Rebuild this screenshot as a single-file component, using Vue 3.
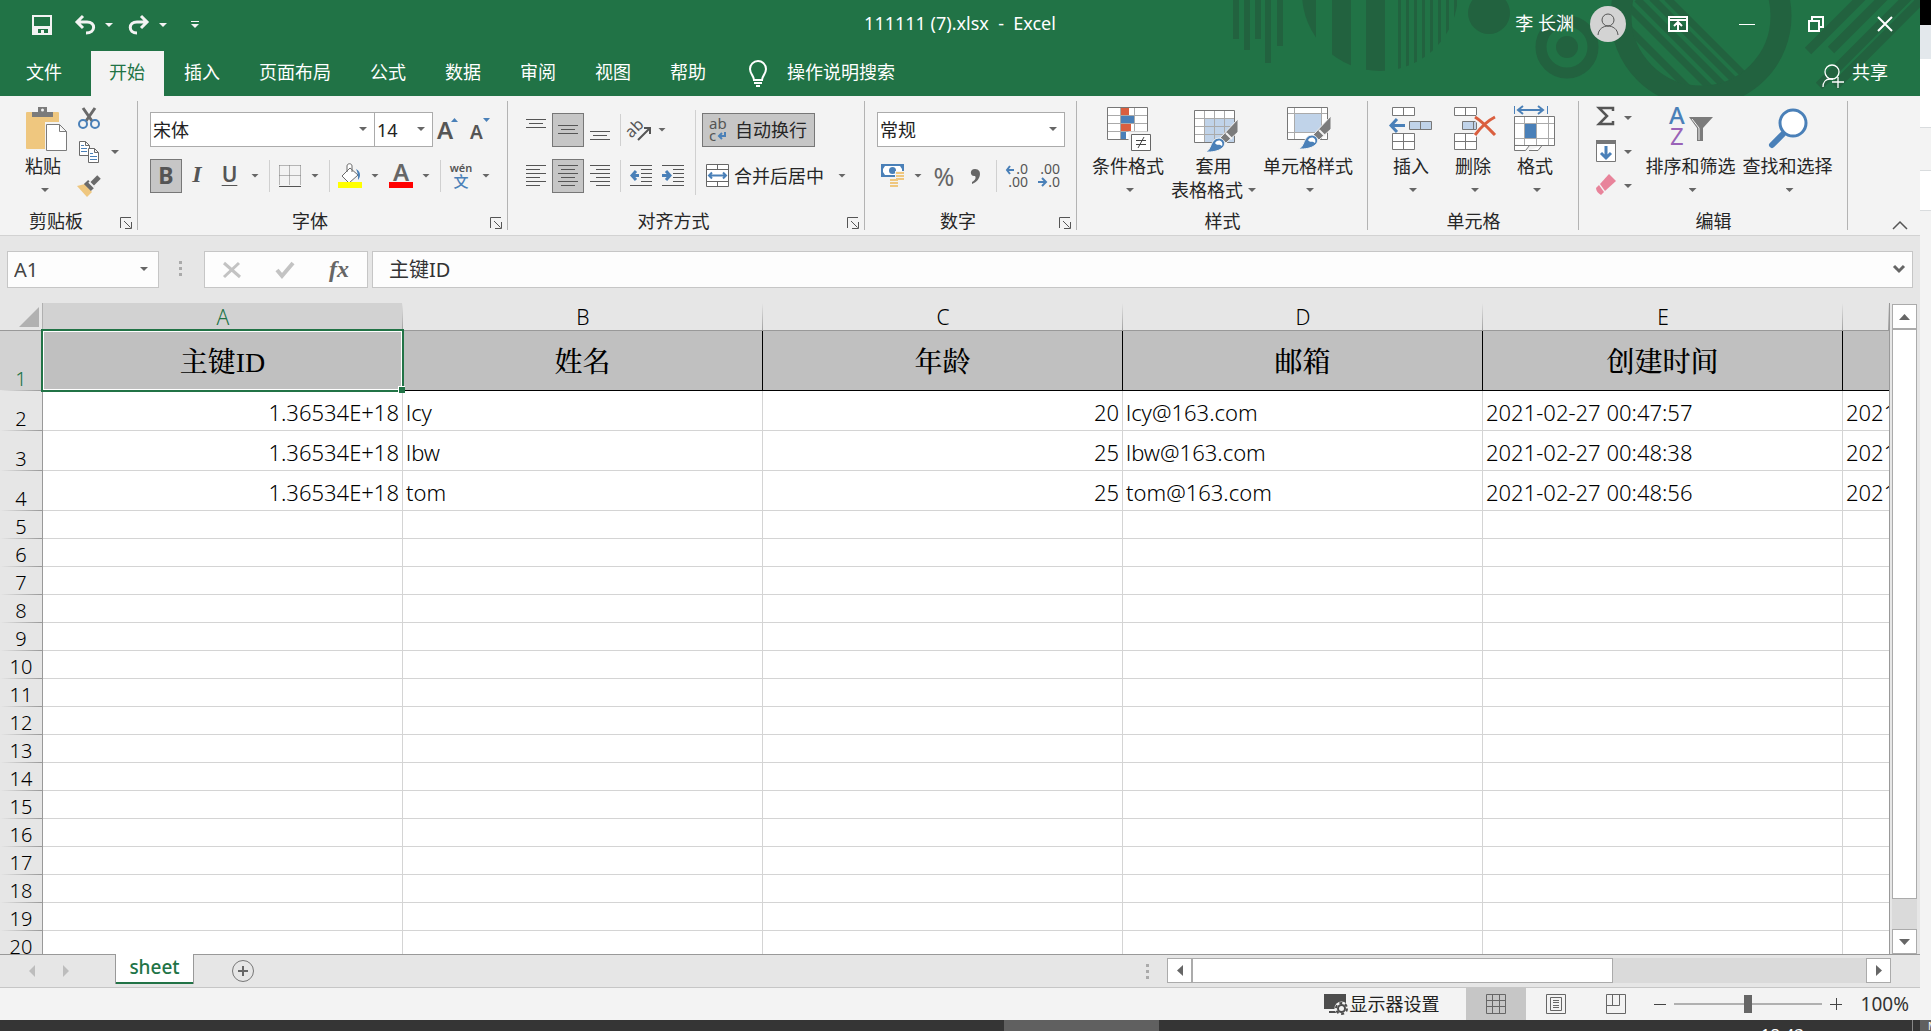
<script setup>
import { ref } from 'vue'

const title = '111111 (7).xlsx  -  Excel'
const tabs = ['插入', '页面布局', '公式', '数据', '审阅', '视图', '帮助']
const columns = ['A', 'B', 'C', 'D', 'E', '']
const headers = ['主键ID', '姓名', '年龄', '邮箱', '创建时间', '']
const records = [
  ['1.36534E+18', 'lcy', '20', 'lcy@163.com', '2021-02-27 00:47:57', '2021'],
  ['1.36534E+18', 'lbw', '25', 'lbw@163.com', '2021-02-27 00:48:38', '2021'],
  ['1.36534E+18', 'tom', '25', 'tom@163.com', '2021-02-27 00:48:56', '2021'],
]
const emptyRows = Array.from({ length: 16 }, (_, i) => i + 5)
const numeric = [0, 2]

const cellName = ref('A1')
const formula = ref('主键ID')
const zoom = ref(50)
const verticalThumb = 95
const horizontalThumb = 62.4
</script>

<template>
  <div class="desktop">
    <div class="window">
      <header class="top">
        <svg class="decor" width="700" height="96" viewBox="1220 0 700 96" aria-hidden="true">
          <defs>
            <clipPath id="disc"><circle cx="1380" cy="-7" r="78" /></clipPath>
            <clipPath id="hole"><circle cx="1701" cy="16" r="70" /></clipPath>
          </defs>
          <g fill="#22623f">
            <path d="M1233 0h6v39h-6zM1244 0h6v50h-6zM1255 0h6v39h-6zM1265 0h6v63h-6zM1277 0h6v46h-6z" />
            <g clip-path="url(#disc)">
              <path d="M1300 0h16v80h-16zM1332 0h19v80h-19zM1366 0h19v80h-19zM1398 0h3v80h-3zM1406 0h3v80h-3zM1414 0h3v80h-3zM1422 0h3v80h-3zM1430 0h3v80h-3zM1438 0h3v80h-3zM1446 0h3v80h-3zM1454 0h3v80h-3z" />
            </g>
            <circle cx="1489" cy="13" r="21" />
            <circle cx="1567" cy="47" r="11" />
          </g>
          <g fill="none" stroke="#22623f">
            <circle cx="1567" cy="47" r="26" stroke-width="11" />
            <circle cx="1701" cy="16" r="80" stroke-width="21" />
            <g clip-path="url(#hole)" stroke-width="7">
              <path d="M1610 10l90 90M1622 0l100 100M1637 -1l100 100M1652 -2l100 100M1667 -2l100 100" />
            </g>
            <path stroke-width="9" d="M1808 51l54-54M1831 50l54-54M1819 86l100-100M1835 86l92-92" />
          </g>
        </svg>

        <div class="titlebar">
          <div class="quick">
            <button class="q-save" aria-label="保存">
              <svg width="20" height="20" viewBox="0 0 20 20"><path fill="none" stroke="#f3f3f3" stroke-width="2" d="M1 1h18v18H1z" /><path fill="#f3f3f3" d="M1 11h18v8h-3v-5H6v5H1zM9 15h3v4H9z" /></svg>
            </button>
            <button class="q-icon" aria-label="撤消">
              <svg width="22" height="20" viewBox="0 0 22 20"><path fill="none" stroke="#f3f3f3" stroke-width="3" d="M9 1L3 7l6 6M3 7h10c9 0 9 11-1 11" /></svg>
            </button>
            <span class="caret light"></span>
            <button class="q-icon" aria-label="恢复">
              <svg width="22" height="20" viewBox="0 0 22 20"><path fill="none" stroke="#f3f3f3" stroke-width="3" d="M13 1l6 6-6 6M19 7H9C0 7 0 18 9 18" /></svg>
            </button>
            <span class="caret light"></span>
            <button class="q-more" aria-label="自定义快速访问工具栏">
              <svg width="8" height="8" viewBox="0 0 8 8"><path fill="#f3f3f3" d="M0 0h8v1H0zM0 3h8L4 7z" /></svg>
            </button>
          </div>
          <h1 class="title">{{ title }}</h1>
          <div class="account">
            <span class="user">李 长渊</span>
            <svg class="avatar" width="36" height="36" viewBox="0 0 36 36"><circle cx="18" cy="18" r="18" fill="#d3d3d3" /><g fill="none" stroke="#555" stroke-width="1"><circle cx="18" cy="14" r="6" /><path d="M8 29c1-12 19-12 20 0" /></g></svg>
            <button class="win" aria-label="功能区显示选项"><svg width="20" height="16" viewBox="0 0 20 16"><path fill="none" stroke="#fff" stroke-width="2" d="M1 1h18v14H1zM1 4h18M10 14V7M6 10l4-4 4 4" /></svg></button>
            <button class="win" aria-label="最小化"><svg width="16" height="16" viewBox="0 0 16 16"><path fill="#fff" d="M0 8h16v1H0z" /></svg></button>
            <button class="win" aria-label="还原"><svg width="16" height="16" viewBox="0 0 16 16"><path fill="none" stroke="#fff" stroke-width="2" d="M1 5h10v10H1zM4 5V1h11v10h-4" /></svg></button>
            <button class="win" aria-label="关闭"><svg width="16" height="16" viewBox="0 0 16 16"><path stroke="#fff" stroke-width="2" d="M1 1l14 14M15 1L1 15" /></svg></button>
          </div>
        </div>

        <nav class="tabs">
          <button class="tab file">文件</button>
          <button class="tab active">开始</button>
          <button v-for="t in tabs" :key="t" class="tab">{{ t }}</button>
          <button class="tell">
            <svg width="18" height="26" viewBox="0 0 18 26"><path fill="none" stroke="#fff" stroke-width="2" d="M5 19c0-4-4-6-4-11a8 8 0 0116 0c0 5-4 7-4 11zM5 22h8M7 25h4" /></svg>
            操作说明搜索
          </button>
          <button class="share">
            <svg width="22" height="24" viewBox="0 0 22 24"><g fill="none" stroke="#fff" stroke-width="1.300"><circle cx="10" cy="8" r="7" /><path d="M1 23c0-5 3-8 7-8h3M16 13v11M10 18h12" /></g></svg>
            共享
          </button>
        </nav>
      </header>

      <div class="ribbon">
        <section class="group">
          <div class="body clip">
            <button class="big">
              <svg width="46" height="46" viewBox="-3 0 46 46"><rect x="3" y="6" width="33" height="37" rx="1" fill="#efc77f" /><path fill="#7b7b7b" d="M9 11V6h6V1h9v5h6v5z" /><circle cx="19.500" cy="4" r="1.500" fill="#f3f3f3" /><path fill="#fff" stroke="#f3f3f3" stroke-width="4" d="M24 18h12l7 7v20H24z" /><path fill="#fff" stroke="#7b7b7b" d="M23.500 18.500h13l7 7v19h-20zM36.500 18.500v7h7" /></svg>
              <span>粘贴</span><i class="caret"></i>
            </button>
            <div class="stack">
              <button aria-label="剪切"><svg width="24" height="24" viewBox="0 0 24 24"><path fill="none" stroke="#6a6a6a" stroke-width="3" d="M6 2l9 13M18 2L9 15" /><g fill="none" stroke="#4a80b8" stroke-width="2"><circle cx="6" cy="18" r="4" /><circle cx="18" cy="18" r="4" /></g></svg></button>
              <button aria-label="复制"><svg width="24" height="24" viewBox="0 0 24 24"><g fill="#fff" stroke="#6a6a6a"><path d="M2.500 1.500h6l4 4v10h-10zM8.500 1.500v4h4" /><path d="M11.500 8.500h6l4 4v10h-10zM17.500 8.500v4h4" /></g><path stroke="#4a80b8" d="M4 5.500h3M4 8.500h6M4 11.500h6M13 13.500h3M13 16.500h7M13 19.500h7" /></svg><i class="caret"></i></button>
              <button aria-label="格式刷"><svg width="24" height="24" viewBox="0 0 24 24"><path fill="#efc77f" d="M0 12l8-2 7 8-5 5z" /><path stroke="#6a6a6a" stroke-width="6" d="M9 8l7 7" /><path stroke="#6a6a6a" stroke-width="5" d="M14 11l8-8" /><path stroke="#f3f3f3" stroke-width="2" d="M12 8l6 6" /></svg></button>
            </div>
          </div>
          <footer class="with-launch"><span>剪贴板</span><button class="launch" aria-label="剪贴板选项"><svg width="12" height="12" viewBox="0 0 12 12"><path fill="none" stroke="#555" d="M.5 11V.500H11M4 4l6.500 6.500M11.500 5v6.500H5" /></svg></button></footer>
        </section>

        <section class="group">
          <div class="body rows">
            <div class="row">
              <label class="combo font"><select aria-label="字体"><option>宋体</option></select><i class="caret"></i></label>
              <label class="combo size"><select aria-label="字号"><option>14</option></select><i class="caret"></i></label>
              <button class="ib" aria-label="增大字号"><svg width="24" height="24" viewBox="0 0 24 24"><text x="1" y="21" font-size="24" font-weight="600" fill="#555">A</text><path fill="#4a80b8" d="M15 4h7l-3.500-4z" /></svg></button>
              <button class="ib" aria-label="减小字号"><svg width="24" height="24" viewBox="0 0 24 24"><text x="2" y="21" font-size="19" font-weight="600" fill="#555">A</text><path fill="#4a80b8" d="M15 0h7l-3.500 4z" /></svg></button>
            </div>
            <div class="row">
              <button class="ib on bold">B</button>
              <button class="ib italic">I</button>
              <span class="split"><button class="under">U</button><i class="caret"></i></span><i class="sep"></i>
              <span class="split"><button aria-label="边框"><svg width="22" height="22" viewBox="0 0 22 22"><path fill="none" stroke="#777" stroke-dasharray="1 1" d="M.5.500h21M.5 10.500h21M.5.500v20M10.500.500v20M21.500.500v20" /><path stroke="#555" stroke-width="1" d="M0 21.500h22" /></svg></button><i class="caret"></i></span><i class="sep"></i>
              <span class="split"><button aria-label="填充颜色"><svg width="24" height="26" viewBox="0 0 24 26"><path fill="#fff" stroke="#6a6a6a" d="M12 5l8 7-9 8-7-7zM9 9V3c0-3 5-3 5 0v6" /><path fill="#4a80b8" d="M18 6c6 3 4 9 2 11 0-4 0-7-2-11" /><path fill="#ff0" d="M0 19h24v6H0z" /></svg></button><i class="caret"></i></span>
              <span class="split"><button aria-label="字体颜色"><svg width="24" height="26" viewBox="0 0 24 26"><text x="4" y="18" font-size="24" font-weight="600" fill="#666">A</text><path fill="#f00" d="M0 19h24v6H0z" /></svg></button><i class="caret"></i></span><i class="sep"></i>
              <span class="split"><button aria-label="显示拼音字段"><svg width="24" height="26" viewBox="0 0 24 26"><text x="12" y="9" text-anchor="middle" font-size="11" font-weight="600" fill="#555">wén</text><text x="12" y="24" text-anchor="middle" font-size="15" font-weight="500" fill="#4a80b8">文</text></svg></button><i class="caret"></i></span>
            </div>
          </div>
          <footer class="with-launch"><span>字体</span><button class="launch" aria-label="字体选项"><svg width="12" height="12" viewBox="0 0 12 12"><path fill="none" stroke="#555" d="M.5 11V.500H11M4 4l6.500 6.500M11.500 5v6.500H5" /></svg></button></footer>
        </section>

        <section class="group">
          <div class="body align">
            <div class="rows">
              <div class="row">
                <button class="ib" aria-label="顶端对齐"><svg width="20" height="22" viewBox="0 0 20 22"><path stroke="#555" d="M0 .500h20M3 4.500h14M0 8.500h20" /></svg></button>
                <button class="ib on" aria-label="垂直居中"><svg width="20" height="22" viewBox="0 0 20 22"><path stroke="#555" d="M0 6.500h20M3 10.500h14M0 14.500h20" /></svg></button>
                <button class="ib" aria-label="底端对齐"><svg width="20" height="22" viewBox="0 0 20 22"><path stroke="#555" d="M0 12.500h20M3 16.500h14M0 20.500h20" /></svg></button>
                <i class="sep near"></i>
                <button class="ib orient" aria-label="方向"><svg width="24" height="24" viewBox="0 0 24 24"><text transform="rotate(-45 8 15)" x="0" y="15" font-size="16" fill="#555">ab</text><path fill="none" stroke="#555" stroke-width="2" d="M9 22L20 11M15 10h6v6" /></svg></button><i class="caret"></i>
              </div>
              <div class="row">
                <button class="ib" aria-label="左对齐"><svg width="20" height="22" viewBox="0 0 20 22"><path stroke="#555" d="M0 .500h20M0 4.500h14M0 8.500h20M0 12.500h14M0 16.500h20M0 20.500h14" /></svg></button>
                <button class="ib on" aria-label="居中"><svg width="20" height="22" viewBox="0 0 20 22"><path stroke="#555" d="M0 .500h20M3 4.500h14M0 8.500h20M3 12.500h14M0 16.500h20M3 20.500h14" /></svg></button>
                <button class="ib" aria-label="右对齐"><svg width="20" height="22" viewBox="0 0 20 22"><path stroke="#555" d="M0 .500h20M6 4.500h14M0 8.500h20M6 12.500h14M0 16.500h20M6 20.500h14" /></svg></button>
                <i class="sep near"></i>
                <button class="ib orient" aria-label="减少缩进量"><svg width="22" height="22" viewBox="0 0 22 22"><path stroke="#555" d="M0 .500h22M11 4.500h11M11 8.500h11M11 12.500h11M11 16.500h11M0 20.500h22" /><path fill="none" stroke="#4a80b8" stroke-width="3" d="M9 10.500H2M6 6l-4 4.500L6 15" /></svg></button>
                <button class="ib" aria-label="增加缩进量"><svg width="22" height="22" viewBox="0 0 22 22"><path stroke="#555" d="M0 .500h22M11 4.500h11M11 8.500h11M11 12.500h11M11 16.500h11M0 20.500h22" /><path fill="none" stroke="#4a80b8" stroke-width="3" d="M0 10.500h7M4 6l4 4.500L4 15" /></svg></button>
              </div>
            </div>
            <i class="sep tall"></i>
            <div class="rows wide">
              <div class="row">
                <button class="wrap on"><svg width="20" height="24" viewBox="0 0 20 24"><text x="0" y="11" font-size="15" fill="#555">ab</text><text x="0" y="23" font-size="15" fill="#555">c</text><path fill="none" stroke="#4a80b8" stroke-width="2" d="M16 14v4h-5M13 15l-3 3 3 3" /></svg>自动换行</button>
              </div>
              <div class="row">
                <button class="merge"><svg width="23" height="23" viewBox="0 0 23 23"><path fill="#fff" stroke="#666" d="M.5.500h22v22H.5zM.5 5.500h22M.5 17.500h22M11.500.500v5M11.500 17.500v5" /><path fill="none" stroke="#4a80b8" stroke-width="2" d="M3 11.500h17M6 8.500l-3 3 3 3M17 8.500l3 3-3 3" /></svg>合并后居中<i class="caret"></i></button>
              </div>
            </div>
          </div>
          <footer class="with-launch"><span>对齐方式</span><button class="launch" aria-label="对齐选项"><svg width="12" height="12" viewBox="0 0 12 12"><path fill="none" stroke="#555" d="M.5 11V.500H11M4 4l6.500 6.500M11.500 5v6.500H5" /></svg></button></footer>
        </section>

        <section class="group">
          <div class="body rows">
            <div class="row">
              <label class="combo format"><select aria-label="数字格式"><option>常规</option></select><i class="caret"></i></label>
            </div>
            <div class="row">
              <button class="ib" aria-label="会计数字格式"><svg width="24" height="24" viewBox="0 0 24 24"><path fill="#4a80b8" d="M0 0h23v13H0z" /><path fill="#fff" d="M4 2h15l2 3v3l-2 3H4L2 8V5z" /><circle cx="11.500" cy="6.500" r="3.500" fill="#4a80b8" /><path fill="#f3f3f3" d="M14 7h10v11H14zM8 15h10v8H8z" /><path stroke="#efc77f" stroke-width="2" d="M15 9h8M15 12h8M15 15h8M9 16h8M9 19h8M9 22h8" /></svg></button>
              <i class="caret money"></i>
              <button class="ib percent">%</button>
              <button class="ib" aria-label="千位分隔样式"><svg width="10" height="16" viewBox="0 0 10 16"><path fill="#666" d="M1 14c4-2 4-5 3-6-5 1-6-7 0-7 8 0 6 12-3 15z" /></svg></button>
              <i class="sep near"></i>
              <button class="ib orient" aria-label="增加小数位数"><svg width="24" height="26" viewBox="0 0 24 26"><text x="23" y="11" text-anchor="end" font-size="14" fill="#555">.0</text><text x="23" y="24" text-anchor="end" font-size="14" fill="#555">.00</text><path fill="none" stroke="#4a80b8" stroke-width="2" d="M9 7H2M5 3L2 7l3 4" /></svg></button>
              <button class="ib" aria-label="减少小数位数"><svg width="24" height="26" viewBox="0 0 24 26"><text x="23" y="11" text-anchor="end" font-size="14" fill="#555">.00</text><text x="23" y="24" text-anchor="end" font-size="14" fill="#555">.0</text><path fill="none" stroke="#4a80b8" stroke-width="2" d="M1 19h8M5 15l4 4-4 4" /></svg></button>
            </div>
          </div>
          <footer class="with-launch"><span>数字</span><button class="launch" aria-label="数字选项"><svg width="12" height="12" viewBox="0 0 12 12"><path fill="none" stroke="#555" d="M.5 11V.500H11M4 4l6.500 6.500M11.500 5v6.500H5" /></svg></button></footer>
        </section>

        <section class="group">
          <div class="body styles">
            <button class="big">
              <svg width="46" height="46" viewBox="0 0 46 46"><path fill="#fff" stroke="#777" d="M2.500 1.500h40v32h-40z" /><path stroke="#aaa" d="M3 9.500h39M3 17.500h39M3 25.500h39M15.500 2v31M29.500 2v31" /><path fill="#da5f3f" d="M16 2h8v7h-8zM16 18h10v7H16z" /><path fill="#4a80b8" d="M16 10h13v7H16zM16 26h5v7h-5z" /><path fill="#fff" stroke="#f3f3f3" stroke-width="3" d="M25 27h21v19H25z" /><path fill="#fff" stroke="#666" d="M26.500 28.500h19v16h-19z" /><path stroke="#444" d="M31 34.500h10M31 38.500h10M39 31l-6 11" /></svg>
              <span>条件格式</span><i class="caret"></i>
            </button>
            <button class="big">
              <svg width="46" height="46" viewBox="0 0 46 46"><path fill="#fff" stroke="#777" d="M3.500 4.500h40v32h-40z" /><path fill="#c0d3e9" d="M14 13h29v23H14z" /><path stroke="#aaa" d="M4 12.500h39M4 20.500h39M4 28.500h39M13.500 5v31M23.500 5v31M33.500 5v31" /><path fill="#7b7b7b" stroke="#f3f3f3" d="M47 13v13L35 37l-6-5z" /><path stroke="#f3f3f3" stroke-width="2" d="M35 27l6 6" /><path fill="#4a80b8" stroke="#f3f3f3" d="M14 46c7-1 5-14 14-14 9 1 9 15-14 14z" /><path fill="#fff" d="M24 37c3-5 9-2 7 3-2-2-5 0-7-3z" /></svg>
              <span>套用</span><span class="second">表格格式<i class="caret"></i></span>
            </button>
            <button class="big">
              <svg width="46" height="46" viewBox="0 0 46 46"><path fill="#fff" stroke="#777" d="M2.500 1.500h40v32h-40z" /><path fill="#c0d3e9" d="M10 8h26v18H10z" /><path stroke="#aaa" d="M3 7.500h39M3 26.500h39M9.500 2v31M36.500 2v31" /><path fill="#7b7b7b" stroke="#f3f3f3" d="M46 10v13L34 34l-6-5z" /><path stroke="#f3f3f3" stroke-width="2" d="M34 24l6 6" /><path fill="#4a80b8" stroke="#f3f3f3" d="M13 43c7-1 5-14 14-14 9 1 9 15-14 14z" /><path fill="#fff" d="M23 34c3-5 9-2 7 3-2-2-5 0-7-3z" /></svg>
              <span>单元格样式</span><i class="caret"></i>
            </button>
          </div>
          <footer><span>样式</span></footer>
        </section>

        <section class="group">
          <div class="body cells">
            <button class="big">
              <svg width="46" height="46" viewBox="0 0 46 46"><path fill="#fff" stroke="#777" d="M4.500 1.500h22v8h-22zM15.500 1.500v8M4.500 27.500h22v16h-22zM15.500 27.500v16M4.500 35.500h22" /><path fill="#c0d3e9" stroke="#777" d="M21.500 15.500h22v8h-22zM32.500 15.500v8" /><path fill="none" stroke="#4a80b8" stroke-width="3" d="M17 19.500H3M9 13l-6 6.500L9 26" /></svg>
              <span>插入</span><i class="caret"></i>
            </button>
            <button class="big">
              <svg width="46" height="46" viewBox="0 0 46 46"><path fill="#fff" stroke="#777" d="M4.500 1.500h22v8h-22zM15.500 1.500v8M4.500 27.500h22v16h-22zM15.500 27.500v16M4.500 35.500h22" /><path fill="#c0d3e9" stroke="#777" d="M12.500 15.500h14v8h-14zM23.500 15.500v8" /><path stroke="#f3f3f3" stroke-width="6" d="M25 11l20 18M45 11L25 29" /><path fill="none" stroke="#da5f3f" stroke-width="3" d="M25 11c8 5 14 12 20 18M45 11c-8 4-14 10-20 18" /></svg>
              <span>删除</span><i class="caret"></i>
            </button>
            <button class="big">
              <svg width="46" height="46" viewBox="0 0 46 46"><path fill="#fff" stroke="#777" d="M2.500 38v6.500h11l4-5M17 44.500h9l4-5M2.500 10.500h40v29h-40z" /><path stroke="#aaa" d="M3 17.500h39M3 32.500h39M12.500 11v28M24.500 11v28M36.500 11v28" /><path fill="#4a80b8" d="M13 18h11v14H13z" /><path fill="none" stroke="#4a80b8" stroke-width="2" d="M6 4h24M11 0L6 4l5 4M26 0l5 4-5 4" /><path stroke="#4a80b8" d="M2.500 0v8M35.500 0v8" /></svg>
              <span>格式</span><i class="caret"></i>
            </button>
          </div>
          <footer><span>单元格</span></footer>
        </section>

        <section class="group">
          <div class="body edit">
            <div class="stack">
              <button aria-label="自动求和"><svg width="24" height="24" viewBox="0 0 24 24"><path fill="none" stroke="#555" stroke-width="2.500" d="M19 5V2H5l8 8-8 8h14v-3" /></svg><i class="caret"></i></button>
              <button aria-label="填充"><svg width="24" height="24" viewBox="0 0 24 24"><path fill="#fff" stroke="#777" d="M2.500 1.500h19v20h-19z" /><path fill="#777" d="M2 0h20v4H2z" /><path fill="none" stroke="#4a80b8" stroke-width="3" d="M12 6v12M7 13l5 5 5-5" /></svg><i class="caret"></i></button>
              <button aria-label="清除"><svg width="24" height="24" viewBox="0 0 24 24"><path fill="#e8839a" d="M15 0l7 7-11 10-5-7z" /><path fill="#e8839a" d="M5 11l5 7-3 3c-3-2-5-4-5-7z" /></svg><i class="caret"></i></button>
            </div>
            <button class="big long">
              <svg width="46" height="46" viewBox="0 0 46 46"><text x="1" y="18" font-size="24" font-weight="500" fill="#4a80b8">A</text><text x="2" y="39" font-size="24" fill="#9a63b8">Z</text><path fill="#7b7b7b" d="M21 11h24L35 22v13h-6V22z" /><path fill="none" stroke="#f3f3f3" d="M24 13l7 9v12" /></svg>
              <span>排序和筛选</span><i class="caret"></i>
            </button>
            <button class="big long">
              <svg width="46" height="46" viewBox="0 0 46 46"><path stroke="#4a80b8" stroke-width="6" stroke-linecap="round" d="M7 39l11-11" /><circle cx="28" cy="17" r="13" fill="#fff" stroke="#4a80b8" stroke-width="3" /></svg>
              <span>查找和选择</span><i class="caret"></i>
            </button>
          </div>
          <footer><span>编辑</span></footer>
        </section>
        <button class="collapse" aria-label="折叠功能区"><svg width="16" height="10" viewBox="0 0 16 10"><path fill="none" stroke="#555" stroke-width="1.500" d="M1 9l7-7 7 7" /></svg></button>
      </div>

      <div class="formula">
        <label class="name"><input v-model="cellName" aria-label="名称框"><i class="caret"></i></label>
        <span class="dots"></span>
        <div class="fx">
          <button aria-label="取消"><svg width="18" height="18" viewBox="0 0 18 18"><path stroke="#c3c3c3" stroke-width="3" d="M1 2l16 14M16 2L1 16" /></svg></button>
          <button aria-label="输入"><svg width="20" height="18" viewBox="0 0 20 18"><path fill="none" stroke="#c3c3c3" stroke-width="4" d="M2 9l5 6L18 2" /></svg></button>
          <button class="fn" aria-label="插入函数">fx</button>
        </div>
        <label class="entry"><input v-model="formula" aria-label="编辑栏"><svg width="12" height="9" viewBox="0 0 12 9"><path fill="none" stroke="#666" stroke-width="3" d="M1 1l5 5 5-5" /></svg></label>
      </div>

      <div class="sheet">
        <div class="viewport">
          <table class="grid">
            <colgroup><col class="c-num"><col v-for="n in 5" :key="n" class="c-data"><col></colgroup>
            <thead>
              <tr>
                <th class="corner"><svg width="20" height="20" viewBox="0 0 20 20"><path fill="#b1b1b1" d="M20 0v20H0z" /></svg></th>
                <th v-for="(c, i) in columns" :key="i" scope="col" :class="{ sel: i === 0 }">{{ c }}</th>
              </tr>
            </thead>
            <tbody>
              <tr class="head">
                <th scope="row" class="sel">1</th>
                <td v-for="(h, i) in headers" :key="i" :class="{ cursor: i === 0 }">{{ h }}</td>
              </tr>
              <tr v-for="(r, i) in records" :key="i" class="record">
                <th scope="row">{{ i + 2 }}</th>
                <td v-for="(v, j) in r" :key="j" :class="{ num: numeric.includes(j) }">{{ v }}</td>
              </tr>
              <tr v-for="n in emptyRows" :key="n">
                <th scope="row">{{ n }}</th>
                <td v-for="k in 6" :key="k"></td>
              </tr>
            </tbody>
          </table>
        </div>
        <div class="vbar">
          <button aria-label="向上滚动"><svg width="11" height="6" viewBox="0 0 11 6"><path fill="#666" d="M0 6h11L5.500 0z" /></svg></button>
          <div class="track"><div class="thumb" :style="{ height: verticalThumb + '%' }"></div></div>
          <button aria-label="向下滚动"><svg width="11" height="6" viewBox="0 0 11 6"><path fill="#666" d="M0 0h11L5.500 6z" /></svg></button>
        </div>
      </div>

      <div class="sheetbar">
        <div class="arrows">
          <button aria-label="上一张工作表"><svg width="6" height="12" viewBox="0 0 6 12"><path fill="#bdbdbd" d="M6 0v12L0 6z" /></svg></button>
          <button aria-label="下一张工作表"><svg width="6" height="12" viewBox="0 0 6 12"><path fill="#bdbdbd" d="M0 0v12l6-6z" /></svg></button>
        </div>
        <button class="sheettab">sheet</button>
        <button class="add" aria-label="新工作表"><svg width="24" height="24" viewBox="0 0 24 24"><circle cx="12" cy="12" r="10.500" fill="none" stroke="#777" /><path stroke="#666" stroke-width="2" d="M12 7v10M7 12h10" /></svg></button>
        <span class="dots"></span>
        <div class="hbar">
          <button aria-label="向左滚动"><svg width="6" height="11" viewBox="0 0 6 11"><path fill="#666" d="M6 0v11L0 5.500z" /></svg></button>
          <div class="track"><div class="thumb" :style="{ width: horizontalThumb + '%' }"></div></div>
          <button aria-label="向右滚动"><svg width="6" height="11" viewBox="0 0 6 11"><path fill="#666" d="M0 0v11l6-5.500z" /></svg></button>
        </div>
      </div>

      <div class="status">
        <button class="display"><svg width="24" height="22" viewBox="0 0 24 22"><path fill="#4d4d4d" d="M0 1h22v15H0zM5 18h9v2H5z" /><circle cx="17.500" cy="15.500" r="7" fill="#f3f3f3" /><circle cx="17.500" cy="15.500" r="3.500" fill="none" stroke="#4d4d4d" stroke-width="2" /><circle cx="17.500" cy="15.500" r="5.500" fill="none" stroke="#4d4d4d" stroke-width="2" stroke-dasharray="3 2.760" /></svg>显示器设置</button>
        <button class="view on" aria-label="普通"><svg width="20" height="20" viewBox="0 0 20 20"><path fill="none" stroke="#666" d="M.5.500h19v19H.5zM.5 6.500h19M.5 12.500h19M6.500.500v19M13.500.500v19" /></svg></button>
        <button class="view" aria-label="页面布局"><svg width="20" height="20" viewBox="0 0 20 20"><path fill="none" stroke="#666" d="M.5.500h19v19H.5zM4.500 3.500h11v13h-11zM7 6.500h6M7 8.500h6M7 11.500h6M7 13.500h6" /></svg></button>
        <button class="view" aria-label="分页预览"><svg width="20" height="20" viewBox="0 0 20 20"><path fill="none" stroke="#666" d="M.5.500h19v19H.5zM.5 11.500h13V.500M6.500.500v11" /></svg></button>
        <button class="zb minus" aria-label="缩小"><svg width="12" height="12" viewBox="0 0 12 12"><path stroke="#444" d="M0 6.500h12" /></svg></button>
        <input v-model="zoom" class="zoom" type="range" min="0" max="100" aria-label="缩放">
        <button class="zb" aria-label="放大"><svg width="12" height="12" viewBox="0 0 12 12"><path stroke="#444" d="M0 6.500h12M6.500 0v12" /></svg></button>
        <button class="pct">100%</button>
      </div>
    </div>

    <aside class="behind">
      <div class="b-black"></div><div class="b-blue"></div><div class="b-white"></div><div class="b-gray"></div><div class="b-row"></div>
    </aside>

    <div class="taskbar"><span class="running"></span><time class="clock">18:43</time><span class="peek"></span><span class="mark">M</span></div>
  </div>
</template>

<style>
body { margin: 0; overflow: hidden; }
</style>

<style scoped>
.desktop {
  display: grid;
  grid-template: minmax(0, 1fr) 11px / minmax(0, 1fr) 11px;
  height: 100vh;
  font: 18px/24px "Noto Sans", "Noto Sans CJK SC", sans-serif;
  color: #262626;
  background: #f3f3f3;
}
.desktop * { box-sizing: border-box; }
button, input, select { font: inherit; color: inherit; margin: 0; padding: 0; border: 0; background: none; }
button { display: flex; align-items: center; justify-content: center; white-space: nowrap; }
svg { display: block; flex: none; overflow: visible; }
select { appearance: none; }
.window { display: flex; flex-direction: column; min-height: 0; overflow: hidden; }
.caret { flex: none; width: 8px; height: 4px; background: #666; clip-path: polygon(0 0, 100% 0, 50% 100%); }
.caret.light { background: #f3f3f3; }

.top { position: relative; background: #217346; color: #fff; overflow: hidden; flex: none; }
.decor { position: absolute; right: 0; top: 0; }
.titlebar { position: relative; display: grid; grid-template-columns: 1fr auto 1fr; align-items: center; height: 51px; padding-bottom: 4px; }
.quick { display: flex; align-items: center; padding: 3px 0 0 32px; }
.q-save { margin-right: 22px; }
.q-icon { margin-right: 9px; }
.quick .caret { margin-right: 15px; }
.q-more { margin-left: 9px; }
.title { margin: 0; padding-bottom: 2px; font-size: 18px; font-weight: 400; white-space: pre; }
.user { padding-bottom: 2px; }
.account { display: flex; align-items: center; justify-content: flex-end; padding-right: 1px; }
.avatar { margin: 0 17px 0 16px; }
.win { width: 69px; height: 46px; }
.tabs { position: relative; display: flex; height: 45px; }
.tab { padding: 0 19px 4px 20px; }
.tab.file { padding: 0 29px 4px 26px; }
.tab.active { padding: 0 19px 4px 18px; background: #f3f3f3; color: #217346; }
.tell { gap: 20px; margin-left: 24px; padding-bottom: 4px; }
.tell svg { margin-top: 4px; }
.share { gap: 8px; margin-left: auto; margin-right: 32px; padding-bottom: 4px; }
.share svg { margin-top: 8px; }

.ribbon { display: flex; height: 140px; flex: none; background: #f3f3f3; border-bottom: 1px solid #d2d2d2; }
.group { display: flex; flex-direction: column; position: relative; }
.group::after { content: ""; position: absolute; right: 0; top: 5px; bottom: 5px; width: 1px; background: #b3b3b3; }
.body { flex: 1; display: flex; padding: 0 12px; }
.group footer { display: flex; justify-content: center; align-items: flex-end; height: 30px; padding-bottom: 2px; position: relative; }
.group .with-launch { padding-right: 26px; }
.launch { position: absolute; right: 6px; bottom: 6px; }
.rows { display: flex; flex-direction: column; gap: 11px; padding-top: 16px; }
.row { display: flex; align-items: center; height: 35px; }
.ib { width: 32px; height: 34px; flex: none; }
.on { background: #c6c6c6; border: 1px solid #777; }
.bold { font-size: 23px; font-weight: 700; color: #555; padding-bottom: 2px; }
.italic { font: italic 700 24px "Liberation Serif", serif; color: #555; width: 28px; padding: 0 0 2px 2px; }
.under { font-size: 21px; font-weight: 600; color: #555; padding-bottom: 4px; text-decoration: underline; text-decoration-thickness: 1px; text-underline-offset: 3px; }
.split { display: flex; align-items: center; }
.split button { width: 39px; height: 34px; }
.split .caret { margin: 0 2px; }
.sep { width: 1px; height: 32px; background: #d0d0d0; margin-left: 8px; flex: none; }
.sep.near { margin-left: 4px; }
.sep.tall { height: 85px; margin: 14px 6px 0 6px; }
.orient { margin-left: 4px; }
.orient + .caret { margin-left: 1px; }
.combo { position: relative; display: block; height: 35px; flex: none; }
.combo select { width: 100%; height: 100%; border: 1px solid #ababab; background: #fff; padding: 0 20px 0 2px; color: #222; }
.combo .caret, .name .caret { position: absolute; right: 8px; top: 15px; pointer-events: none; }
.font { width: 225px; }
.size { width: 59px; margin: 0 -1px; }
.format { width: 188px; }
.wide { flex: 1; }
.wrap { height: 34px; gap: 6px; padding: 0 7px 0 6px; }
.merge { gap: 5px; padding-left: 4px; }
.merge .caret { margin: 0 7px 0 9px; }
.money { margin: 0 6px 0 5px; }
.percent { font-size: 25px; color: #666; }

.big { flex-direction: column; justify-content: flex-start; padding-top: 10px; }
.big > span { line-height: 24px; margin-top: 2px; }
.big > .caret { margin: 10px 0 0 4px; }
.big > .second { display: flex; align-items: center; gap: 5px; margin: 0; }
.stack { display: flex; flex-direction: column; gap: 10px; padding-top: 10px; }
.stack button { justify-content: flex-start; height: 24px; gap: 10px; }
.clip { width: 138px; padding: 0 0 0 20px; }
.clip .stack { margin-left: 11px; }
.styles { padding: 0 15px; gap: 7px; }
.cells { padding: 0 13px 0 12px; }
.cells .big { width: 62px; }
.edit { padding: 0 12px 0 15px; }
.edit .stack button { gap: 6px; }
.long { width: 97px; }
.edit .stack { margin-right: 10px; }
.collapse { margin: auto 12px 5px auto; }

.formula { display: flex; align-items: stretch; flex: none; height: 67px; padding: 15px 7px 15px; background: #e6e6e6; color: #444; }
.name, .fx, .entry { border: 1px solid #c6c6c6; background: #fdfdfd; }
.name { position: relative; width: 152px; }
.name .caret { right: 10px; }
.name input { width: 100%; height: 100%; padding-left: 6px; font-size: 20px; }
.dots { width: 3px; height: 16px; background: repeating-linear-gradient(#aaa 0 3px, transparent 3px 6px); }
.formula .dots { margin: 10px 22px 0 20px; }
.fx { display: flex; justify-content: space-between; align-items: center; width: 164px; padding: 0 18px; }
.fn { font: italic 700 24px "Liberation Serif", serif; color: #666; }
.entry { flex: 1; display: flex; align-items: center; margin-left: 4px; padding: 0 7px 0 16px; }
.entry input { flex: 1; font-size: 20px; color: #333; }

.sheet { flex: 1; min-height: 0; display: flex; gap: 2px; background: #e6e6e6; padding-right: 3px; }
.viewport { flex: 1; min-width: 0; overflow: hidden; background: #fff; border-right: 1px solid #999; }
.grid { width: 100%; table-layout: fixed; border-collapse: separate; border-spacing: 0; font-size: 20px; color: #000; font-weight: 300; }
.grid th, .grid td { padding: 0 3px; overflow: hidden; white-space: nowrap; font-weight: 300; }
.c-num { width: 43px; }
.c-data { width: 360px; }
.grid thead th { height: 28px; line-height: 25px; padding-top: 2px; font-size: 21px; background: linear-gradient(#e6e6e6, #a0a0a0) right / 1px 100% no-repeat #e6e6e6; border-bottom: 1px solid #999; }
.grid thead .corner { padding: 4px 4px 3px; background: linear-gradient(#b0b0b0, #b0b0b0) right / 1px 100% no-repeat #e6e6e6; }
.corner svg { margin-left: auto; margin-right: 0; }
.grid thead .sel { background-color: #d2d2d2; color: #217346; }
tbody tr { height: 28px; }
tbody th { background: linear-gradient(90deg, #e6e6e6, #999) bottom / 100% 1px no-repeat #e6e6e6; border-right: 1px solid #999; vertical-align: bottom; line-height: 24px; }
tbody th.sel { background-color: #d2d2d2; color: #217346; }
tbody td { border-right: 1px solid #d4d4d4; border-bottom: 1px solid #d4d4d4; text-align: left; }
tbody td.num { text-align: right; }
tbody td:last-child { border-right: 0; text-overflow: clip; }
.record { height: 40px; }
.grid .record td { font-size: 22px; padding-top: 3px; }
.head { height: 60px; }
.head td { background: #c0c0c0; border-color: #000; text-align: center; padding-top: 4px; font: 500 28px/34px "Liberation Serif", "Noto Serif CJK SC", "Noto Sans CJK SC", serif; }
.grid .head td { font-weight: 500; padding-top: 4px; }
.head td.cursor { position: relative; overflow: visible; }
.cursor::before { content: ""; position: absolute; inset: -2px -2px -2px -2px; border: 2px solid #217346; box-shadow: inset 0 0 0 1px #fff; }
.cursor::after { content: ""; position: absolute; right: -3px; bottom: -3px; width: 6px; height: 6px; background: #217346; border: solid #fff; border-width: 1px 0 0 1px; }
.vbar { width: 25px; display: flex; flex-direction: column; margin-top: 1px; }
.vbar button, .hbar button, .thumb { background: #fff; border: 1px solid #ababab; flex: none; }
.vbar button { height: 25px; }
.track { flex: 1; background: #dadada; }

.sheetbar { display: flex; flex: none; height: 34px; background: #e6e6e6; border-top: 1px solid #999; border-bottom: 1px solid #c6c6c6; padding-right: 29px; }
.arrows { display: flex; gap: 28px; width: 115px; padding-left: 29px; }
.sheettab { margin-top: -1px; width: 79px; height: 30px; background: #fff; border: solid #999; border-width: 0 1px; box-shadow: inset 0 -2px #217346; color: #217346; font-size: 19px; font-weight: 500; padding-bottom: 4px; }
.add { margin: 4px 0 auto 37px; }
.sheetbar .dots { margin: 9px 18px 0 auto; }
.hbar { display: flex; flex: 0 1 724px; height: 25px; margin-top: 3px; }
.hbar button { width: 25px; }
.hbar .thumb { height: 25px; }

.status { display: flex; align-items: center; justify-content: flex-end; flex: none; height: 32px; background: #f3f3f3; padding-right: 11px; }
.display { gap: 2px; margin-right: 26px; color: #222; }
.view { width: 60px; height: 32px; }
.view.on { border: 0; }
.zb { width: 12px; height: 24px; }
.minus { margin-left: 8px; }
.zoom { appearance: none; width: 148px; height: 18px; margin: 0 8px; background: linear-gradient(#b0b0b0, #b0b0b0) center / 100% 2px no-repeat; }
.zoom::-webkit-slider-thumb { appearance: none; width: 8px; height: 18px; background: #666; }
.pct { margin-left: 19px; font-size: 19px; color: #333; }

.behind { display: flex; flex-direction: column; background: #f3f3f3; }
.b-black { height: 25px; background: #000; }
.b-blue { height: 34px; background: #e3e8ec; }
.b-white { height: 69px; background: #fff; border-bottom: 1px solid #d9dcde; }
.b-gray { height: 43px; border-bottom: 1px solid #d9dcde; }
.b-row { height: 40px; background: #fff; border-bottom: 1px solid #d9dcde; }

.taskbar { grid-column: 1 / -1; display: flex; background: #353535; color: #fff; overflow: hidden; }
.running { width: 8%; margin-left: 52%; background: #606060; }
.clock { margin: 3px 108px 0 auto; font-size: 17px; line-height: 24px; }
.peek { width: 1px; background: #888; margin-right: 7px; }
.mark { width: 11px; padding-left: 8px; background: #606060; font-size: 10px; line-height: 12px; }
</style>
